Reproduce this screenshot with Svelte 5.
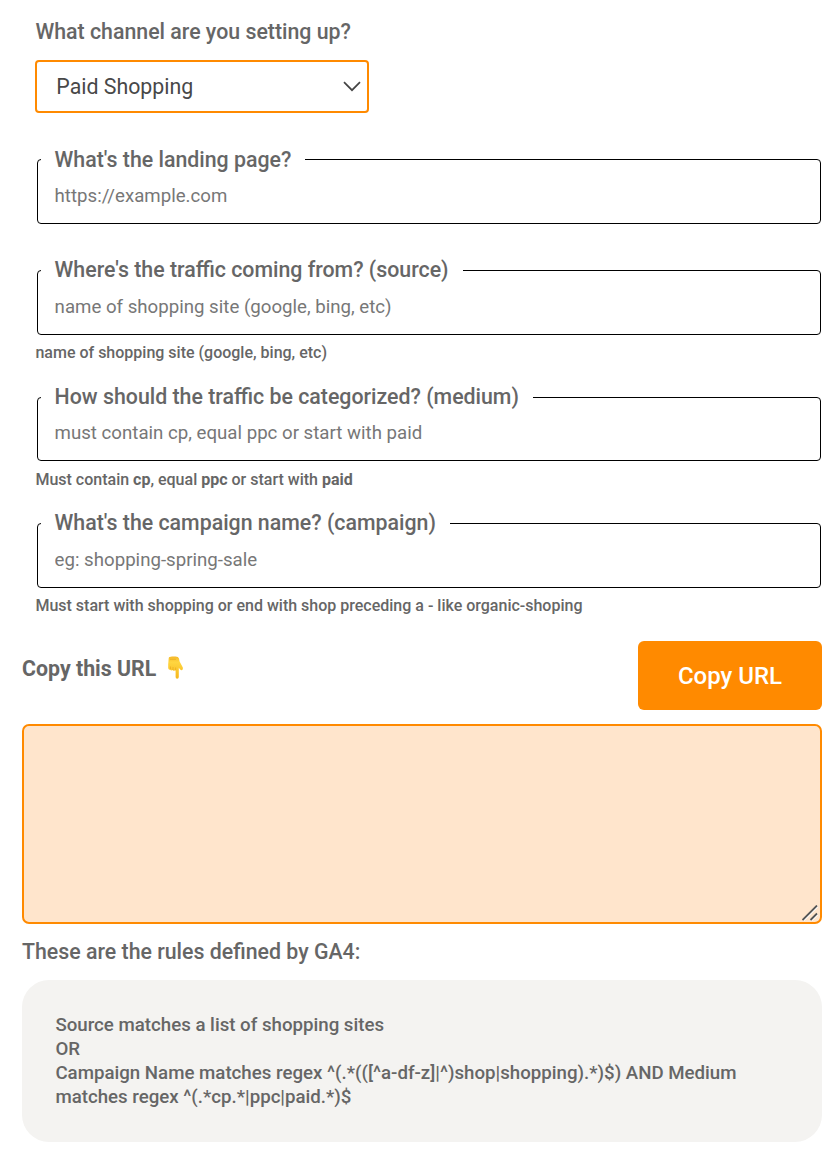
<script>
  const fields = [
    { id: 'landing', label: "What's the landing page?", placeholder: 'https://example.com', hint: [] },
    {
      id: 'source',
      label: "Where's the traffic coming from? (source)",
      placeholder: 'name of shopping site (google, bing, etc)',
      hint: [{ text: 'name of shopping site (google, bing, etc)' }]
    },
    {
      id: 'medium',
      label: 'How should the traffic be categorized? (medium)',
      placeholder: 'must contain cp, equal ppc or start with paid',
      hint: [
        { text: 'Must contain ' },
        { text: 'cp', bold: true },
        { text: ', equal ' },
        { text: 'ppc', bold: true },
        { text: ' or start with ' },
        { text: 'paid', bold: true }
      ]
    },
    {
      id: 'campaign',
      label: "What's the campaign name? (campaign)",
      placeholder: 'eg: shopping-spring-sale',
      hint: [{ text: 'Must start with shopping or end with shop preceding a - like organic-shoping' }]
    }
  ];
</script>

<main>
  <section class="channel">
    <div class="question">What channel are you setting up?</div>
    <div class="select">
      <span>Paid Shopping</span>
      <svg width="18" height="11" viewBox="0 0 18 11"><path d="M1 1.2 9 9.2 17 1.2" fill="none" stroke="#444" stroke-width="1.7" /></svg>
    </div>
  </section>

  {#each fields as field}
    <section class="field {field.id}">
      <div class="box">
        <label for={field.id}>{field.label}</label>
        <input id={field.id} placeholder={field.placeholder} />
      </div>
      {#if field.hint.length}
        <p class="hint">{#each field.hint as part}{#if part.bold}<b>{part.text}</b>{:else}{part.text}{/if}{/each}</p>
      {/if}
    </section>
  {/each}

  <section class="copy">
    <div class="title">
      <span>Copy this URL</span>
      <svg width="18" height="24" viewBox="0 0 18 24">
        <defs>
          <linearGradient id="skin" x1="0" y1="0" x2="0" y2="1">
            <stop offset="0" stop-color="#f5b82a" />
            <stop offset=".25" stop-color="#ffd640" />
            <stop offset="1" stop-color="#f6b61c" />
          </linearGradient>
        </defs>
        <path d="M1.700 2.500Q1.700 .6 5 .6h3.500q3 0 3.500 2l.5 2.700 3.300 6.200q.6 2-.8 2.600-1.200.2-2-.9l-1.200-1.500v9.300q0 1.800-1.600 1.800T8.600 21v-6.500l-.6-.2q-.8.900-2 .3l-.6-.5q-1.300.8-2.200-.4-1.800.3-2-1.700V8z" fill="url(#skin)" />
        <path d="M3.500 13.200V10.500m2.500 3.500V11m2.600 3.300V11.500M3 3.300h6" fill="none" stroke="#d98e0b" stroke-width=".7" opacity=".55" />
      </svg>
    </div>
    <button>Copy URL</button>
  </section>

  <div class="output">
    <svg width="16" height="16" viewBox="0 0 16 16"><path d="M1.500 15.800 15.800 1.500M9.500 15.800 15.800 9.500" fill="none" stroke="#fff" stroke-width="1.300" /><path d="M.5 15 15 .5M8.500 15 15 8.500" fill="none" stroke="#555" stroke-width="1.800" /></svg>
  </div>

  <div class="rules-title">These are the rules defined by GA4:</div>
  <div class="rules">
    <div>Source matches a list of shopping sites</div>
    <div>OR</div>
    <div>Campaign Name matches regex ^(.*(([^a-df-z]|^)shop|shopping).*)$) AND Medium matches regex ^(.*cp.*|ppc|paid.*)$</div>
  </div>
</main>

<style>
  :global(body) { background: #fff; }
  main {
    box-sizing: border-box;
    width: 840px;
    height: 1158px;
    padding: 18px 18px 0 22px;
    display: flex;
    flex-direction: column;
    font-family: Roboto, sans-serif;
    font-size: 21.333px;
    font-weight: 500;
    color: #666;
    overflow: hidden;
  }
  .channel { height: 141px; padding-left: 13px; }
  .question { height: 42px; line-height: 28px; padding-left: .4px; }
  .select {
    box-sizing: border-box;
    display: flex;
    align-items: center;
    justify-content: space-between;
    width: 334px;
    height: 53px;
    padding: 0 6px 0 19.300px;
    border: 2px solid #ff8a00;
    border-radius: 4px;
    font-weight: 400;
    color: #484848;
  }
  .field { height: 126px; padding: 0 1px 0 15px; }
  .landing { height: 111px; }
  .source { height: 127px; }
  .campaign { height: 118px; }
  .box {
    position: relative;
    box-sizing: border-box;
    height: 65px;
    border: 1px solid #000;
    border-radius: 4px;
    display: flex;
  }
  .medium .box { height: 64px; margin-bottom: 8px; }
  label {
    position: absolute;
    left: 3px;
    top: -15px;
    padding: 0 14px 0 13.600px;
    line-height: 28px;
    background: #fff;
    white-space: nowrap;
  }
  .landing label { top: -14px; }
  input {
    flex: 1;
    min-width: 0;
    border: 0;
    outline: 0;
    background: none;
    padding: 8px 16.600px 0;
    font: 400 18.667px Roboto, sans-serif;
  }
  input::placeholder { color: #777; opacity: 1; }
  .hint { margin: 7px 0 0 -1.600px; font-size: 16px; line-height: 22px; white-space: pre; }
  .hint b { font-weight: 700; }
  .copy { display: flex; justify-content: space-between; height: 83px; }
  .title { display: flex; height: 55px; align-items: center; gap: 11px; font-weight: 700; }
  .title svg { margin-top: -1px; }
  button {
    width: 184px;
    height: 69px;
    border: 0;
    border-radius: 6px;
    padding: 0;
    background: #ff8a00;
    color: #fff;
    font: 500 24px Roboto, sans-serif;
  }
  .output {
    box-sizing: border-box;
    height: 200px;
    flex: none;
    display: flex;
    align-items: flex-end;
    justify-content: flex-end;
    padding: 1px 2px;
    border: 2px solid #ff8a00;
    border-radius: 7px;
    background: #ffe5cc;
  }
  .rules-title { margin: 14px 0; line-height: 28px; }
  .rules {
    box-sizing: border-box;
    height: 162px;
    padding: 33px 33px 33px 33.400px;
    border-radius: 27px;
    background: #f4f3f1;
    font-size: 18.680px;
    line-height: 24px;
  }
</style>
